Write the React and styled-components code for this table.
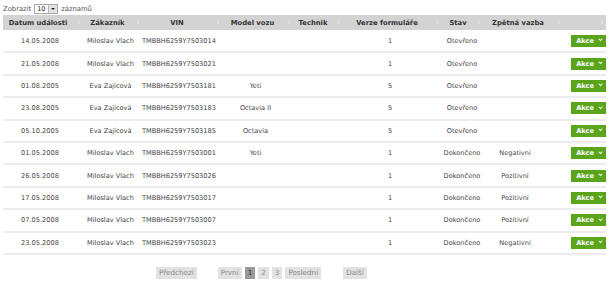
import React from 'react';
import styled, { createGlobalStyle } from 'styled-components';

const GlobalStyle = createGlobalStyle`
  html, body {
    margin: 0;
    padding: 0;
    background: #ffffff;
  }
  body {
    font-family: "DejaVu Sans", Verdana, sans-serif;
    font-size: 6.6px;
    color: #444;
  }
`;

const Page = styled.div`
  width: 609px;
  padding: 4px 3px 0 3px;
  box-sizing: border-box;
`;

const LengthBar = styled.div`
  display: flex;
  align-items: center;
  gap: 3px;
  height: 10px;
  color: #555;
  font-size: 6.8px;
`;

const SelectBox = styled.div`
  display: flex;
  align-items: center;
  justify-content: space-between;
  width: 20px;
  height: 8px;
  border: 1px solid #a8a8a8;
  background: #fff;
  padding-left: 2px;
  font-size: 6.5px;
  color: #222;
`;

const SelectArrow = styled.span`
  display: flex;
  align-items: center;
  justify-content: center;
  width: 8px;
  height: 8px;
  background: #e4e4e4;
  border-left: 1px solid #b8b8b8;
  &::after {
    content: '';
    border-left: 2px solid transparent;
    border-right: 2px solid transparent;
    border-top: 2px solid #222;
  }
`;

const Table = styled.table`
  width: 603px;
  margin-top: 1px;
  border-collapse: collapse;
  table-layout: fixed;
`;

const HeadCell = styled.th`
  position: relative;
  height: 15px;
  padding: 0 ${p => (p.$pad != null ? p.$pad : 10)}px 0 0;
  background: #d3d3d3;
  color: #333;
  font-weight: bold;
  font-size: 6.8px;
  text-align: center;
  white-space: nowrap;
`;

const SortIcon = styled.span`
  position: absolute;
  right: 3px;
  top: 5px;
  display: flex;
  flex-direction: column;
  gap: 1px;
  &::before,
  &::after {
    content: '';
    border-left: 1.5px solid transparent;
    border-right: 1.5px solid transparent;
  }
  &::before {
    border-bottom: 2px solid #e6e6e6;
  }
  &::after {
    border-top: 2px solid #e6e6e6;
  }
`;

const Row = styled.tr`
  height: 22.4px;
  border-bottom: 2px solid #ececec;
`;

const Cell = styled.td`
  padding: 0 ${p => (p.$pad ? p.$pad : 0)}px 0 0;
  text-align: ${p => p.$align || 'center'};
  color: #444;
  white-space: nowrap;
`;

const ActionButton = styled.button`
  display: inline-flex;
  align-items: center;
  gap: 5px;
  height: 12px;
  padding: 0 4px 0 5px;
  border: none;
  background: #5aa51c;
  color: #fff;
  font-family: inherit;
  font-weight: bold;
  font-size: 6.6px;
  cursor: pointer;
`;

const Chevron = styled.span`
  width: 2px;
  height: 2px;
  border-right: 1px solid #fff;
  border-bottom: 1px solid #fff;
  transform: rotate(45deg) translate(-1px, -1px);
`;

const Pager = styled.div`
  display: flex;
  align-items: center;
  height: 30px;
  padding: 6px 0 0 150px;
  box-sizing: border-box;
`;

const PageButton = styled.span`
  display: inline-flex;
  align-items: center;
  justify-content: center;
  height: 12px;
  padding: 0 3px;
  margin-left: ${p => p.$gap || 3}px;
  background: ${p => (p.$active ? '#9a9a9a' : '#e2e2e2')};
  color: ${p => (p.$active ? '#333' : '#8a8a8a')};
  font-size: 7.2px;
`;

const columns = [
  { label: 'Datum události', width: 80 },
  { label: 'Zákazník', width: 59 },
  { label: 'VIN', width: 80 },
  { label: 'Model vozu', width: 71 },
  { label: 'Technik', width: 50 },
  { label: 'Verze formuláře', width: 98 },
  { label: 'Stav', width: 42, pad: 8 },
  { label: 'Zpětná vazba', width: 80 },
  { label: '', width: 43 },
];

const rows = [
  ['14.05.2008', 'Miloslav Vlach', 'TMBBH6259Y7503014', '', '', '1', 'Otevřeno', ''],
  ['21.05.2008', 'Miloslav Vlach', 'TMBBH6259Y7503021', '', '', '1', 'Otevřeno', ''],
  ['01.08.2005', 'Eva Zajícová', 'TMBBH6259Y7503181', 'Yeti', '', '5', 'Otevřeno', ''],
  ['23.08.2005', 'Eva Zajícová', 'TMBBH6259Y7503183', 'Octavia II', '', '5', 'Otevřeno', ''],
  ['05.10.2005', 'Eva Zajícová', 'TMBBH6259Y7503185', 'Octavia', '', '5', 'Otevřeno', ''],
  ['01.05.2008', 'Miloslav Vlach', 'TMBBH6259Y7503001', 'Yeti', '', '1', 'Dokončeno', 'Negativní'],
  ['26.05.2008', 'Miloslav Vlach', 'TMBBH6259Y7503026', '', '', '1', 'Dokončeno', 'Pozitivní'],
  ['17.05.2008', 'Miloslav Vlach', 'TMBBH6259Y7503017', '', '', '1', 'Dokončeno', 'Pozitivní'],
  ['07.05.2008', 'Miloslav Vlach', 'TMBBH6259Y7503007', '', '', '1', 'Dokončeno', 'Pozitivní'],
  ['23.05.2008', 'Miloslav Vlach', 'TMBBH6259Y7503023', '', '', '1', 'Dokončeno', 'Negativní'],
];

const App = () => (
  <Page>
    <GlobalStyle />
    <LengthBar>
      Zobrazit
      <SelectBox>
        10
        <SelectArrow />
      </SelectBox>
      záznamů
    </LengthBar>

    <Table>
      <colgroup>
        {columns.map((c, i) => (
          <col key={i} style={{ width: c.width }} />
        ))}
      </colgroup>
      <thead>
        <tr>
          {columns.map((c, i) => (
            <HeadCell key={i} $pad={c.pad}>
              {c.label}
              <SortIcon />
            </HeadCell>
          ))}
        </tr>
      </thead>
      <tbody>
        {rows.map((r, i) => (
          <Row key={i}>
            <Cell $pad={6}>{r[0]}</Cell>
            <Cell $pad={4}>{r[1]}</Cell>
            <Cell $pad={10}>{r[2]}</Cell>
            <Cell $pad={4}>{r[3]}</Cell>
            <Cell>{r[4]}</Cell>
            <Cell $pad={4}>{r[5]}</Cell>
            <Cell $pad={0}>{r[6]}</Cell>
            <Cell $pad={16}>{r[7]}</Cell>
            <Cell $align="right">
              <ActionButton>
                Akce
                <Chevron />
              </ActionButton>
            </Cell>
          </Row>
        ))}
      </tbody>
    </Table>

    <Pager>
      <PageButton $gap={0}>Předchozí</PageButton>
      <PageButton $gap={21}>První</PageButton>
      <PageButton $active>1</PageButton>
      <PageButton>2</PageButton>
      <PageButton>3</PageButton>
      <PageButton>Poslední</PageButton>
      <PageButton $gap={22}>Další</PageButton>
    </Pager>
  </Page>
);

export default App;
